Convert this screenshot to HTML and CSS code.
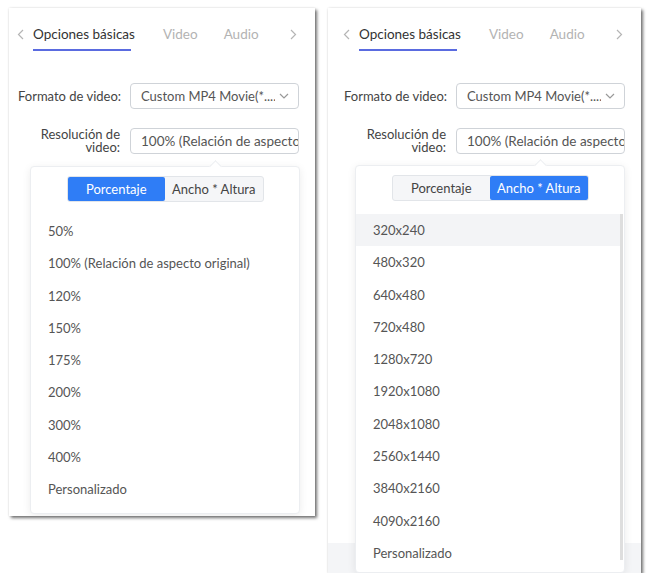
FILE: index.html
```html
<!DOCTYPE html>
<html lang="es">
<head>
    <meta charset="UTF-8">
    <meta name="viewport" content="width=device-width, initial-scale=1.0">
    <title>Opciones básicas</title>
    <link rel="stylesheet" href="styles.css">
</head>
<body>
    <div class="page">
        <!-- porcentaje -->
        <div class="panel">
            <div class="tabs">
                <svg class="tab-arrow" width="7" height="11" viewBox="0 0 7 11"><path d="M6 1L1.5 5.5L6 10" fill="none" stroke="#b5b5b5" stroke-width="1.2"/></svg>
                <span class="tab active">Opciones básicas</span>
                <span class="tab">Video</span>
                <span class="tab">Audio</span>
                <svg class="tab-arrow right" width="7" height="11" viewBox="0 0 7 11"><path d="M1 1L5.5 5.5L1 10" fill="none" stroke="#b5b5b5" stroke-width="1.2"/></svg>
            </div>

            <div class="form">
                <div class="form-row">
                    <label>Formato de video:</label>
                    <div class="select">
                        <span class="select-text">Custom MP4 Movie(*....</span>
                        <svg class="chevron" width="10" height="6" viewBox="0 0 10 6"><path d="M1 1L5 5L9 1" fill="none" stroke="#999" stroke-width="1.2"/></svg>
                    </div>
                </div>
                <div class="form-row">
                    <label>Resolución de<br>video:</label>
                    <div class="select input">
                        <span class="select-text">100% (Relación de aspecto original)</span>
                    </div>
                </div>
            </div>

            <div class="dropdown">
                <div class="toggle">
                    <span class="toggle-btn active">Porcentaje</span>
                    <span class="toggle-btn">Ancho * Altura</span>
                </div>
                <ul class="options">
                    <li>50%</li>
                    <li>100% (Relación de aspecto original)</li>
                    <li>120%</li>
                    <li>150%</li>
                    <li>175%</li>
                    <li>200%</li>
                    <li>300%</li>
                    <li>400%</li>
                    <li>Personalizado</li>
                </ul>
            </div>
        </div>

        <!-- ancho * altura -->
        <div class="panel panel-tall">
            <div class="tabs">
                <svg class="tab-arrow" width="7" height="11" viewBox="0 0 7 11"><path d="M6 1L1.5 5.5L6 10" fill="none" stroke="#b5b5b5" stroke-width="1.2"/></svg>
                <span class="tab active">Opciones básicas</span>
                <span class="tab">Video</span>
                <span class="tab">Audio</span>
                <svg class="tab-arrow right" width="7" height="11" viewBox="0 0 7 11"><path d="M1 1L5.5 5.5L1 10" fill="none" stroke="#b5b5b5" stroke-width="1.2"/></svg>
            </div>

            <div class="form">
                <div class="form-row">
                    <label>Formato de video:</label>
                    <div class="select">
                        <span class="select-text">Custom MP4 Movie(*....</span>
                        <svg class="chevron" width="10" height="6" viewBox="0 0 10 6"><path d="M1 1L5 5L9 1" fill="none" stroke="#999" stroke-width="1.2"/></svg>
                    </div>
                </div>
                <div class="form-row">
                    <label>Resolución de<br>video:</label>
                    <div class="select input">
                        <span class="select-text">100% (Relación de aspecto original)</span>
                    </div>
                </div>
            </div>

            <div class="panel-footer"></div>

            <div class="dropdown">
                <div class="toggle">
                    <span class="toggle-btn">Porcentaje</span>
                    <span class="toggle-btn active">Ancho * Altura</span>
                </div>
                <ul class="options scroll">
                    <li class="hover">320x240</li>
                    <li>480x320</li>
                    <li>640x480</li>
                    <li>720x480</li>
                    <li>1280x720</li>
                    <li>1920x1080</li>
                    <li>2048x1080</li>
                    <li>2560x1440</li>
                    <li>3840x2160</li>
                    <li>4090x2160</li>
                    <li>Personalizado</li>
                </ul>
            </div>
        </div>
    </div>
</body>
</html>
```

FILE: styles.css
```css
* {
    margin: 0;
    padding: 0;
    box-sizing: border-box;
}

body {
    font-family: "Lato", "Noto Sans", sans-serif;
    font-size: 13px;
    color: #444;
    background: #fff;
}

.page {
    display: flex;
    align-items: flex-start;
    gap: 13px;
    padding: 8px 0 0 9px;
}

.panel {
    position: relative;
    display: flex;
    flex-direction: column;
    width: 306px;
    height: 508px;
    background: #fff;
    box-shadow: 2px 2px 3px rgba(0, 0, 0, 0.55), 0 0 2px rgba(0, 0, 0, 0.12);
    overflow: hidden;
}

.panel-tall {
    width: 313px;
    height: 565px;
    padding-left: 7px;
}

/* tabs */
.tabs {
    display: flex;
    align-items: flex-start;
    padding: 18px 18px 0 8px;
}

.tab-arrow {
    margin-top: 3px;
    margin-right: 9px;
}

.tab-arrow.right {
    margin-left: auto;
    margin-right: 0;
}

.tab {
    position: relative;
    line-height: 16px;
    padding-bottom: 9px;
    margin-right: 26px;
    color: #b3b3b3;
    font-size: 13.5px;
}

.tab.active {
    color: #333;
    margin-right: 28px;
}

.tab.active::after {
    content: "";
    position: absolute;
    left: 0;
    bottom: 0;
    width: calc(100% - 4px);
    height: 2px;
    background: #5a6be0;
}

/* form */
.form {
    margin-top: 32px;
    display: flex;
    flex-direction: column;
    gap: 19px;
}

.form-row {
    display: grid;
    grid-template-columns: 102px 1fr;
    column-gap: 10px;
    align-items: center;
    padding: 0 16px 0 9px;
}

.form-row label {
    text-align: right;
    line-height: 13px;
    color: #444;
    white-space: nowrap;
}

.select {
    display: flex;
    align-items: center;
    height: 26px;
    padding: 0 9px 0 10px;
    border: 1px solid #cfd3d8;
    border-radius: 4px;
    overflow: hidden;
    color: #555;
}

.select-text {
    flex: 1;
    white-space: nowrap;
    overflow: hidden;
}

.chevron {
    flex-shrink: 0;
    margin-left: 4px;
}

.select.input {
    padding-right: 0;
}

.select.input .select-text {
    font-size: 13.5px;
}

.panel-footer {
    margin-top: auto;
    margin-left: -7px;
    height: 30px;
    background: #f4f5f7;
}

/* dropdown */
.dropdown {
    position: absolute;
    top: 158px;
    left: 21px;
    width: 270px;
    height: 348px;
    background: #fff;
    border: 1px solid #eceef1;
    border-radius: 4px;
    box-shadow: 0 2px 8px rgba(0, 0, 0, 0.08);
}

.panel-tall .dropdown {
    top: 157px;
    left: 27px;
    height: auto;
    bottom: 0;
}

.dropdown::before {
    content: "";
    position: absolute;
    top: -5px;
    left: 180px;
    width: 8px;
    height: 8px;
    background: #fff;
    border-top: 1px solid #eceef1;
    border-left: 1px solid #eceef1;
    transform: rotate(45deg);
}

.toggle {
    display: flex;
    width: 197px;
    margin: 9px auto 0;
    border: 1px solid #e2e5e9;
    border-radius: 3px;
    background: #f5f6f8;
}

.toggle-btn {
    flex: 1;
    height: 24px;
    line-height: 24px;
    text-align: center;
    color: #444;
    border-radius: 2px;
}

.toggle-btn.active {
    background: #2f7df6;
    color: #fff;
}

.options {
    list-style: none;
    margin-top: 13px;
}

.options li {
    height: 32.3px;
    line-height: 32px;
    padding-left: 17px;
    color: #555;
    white-space: nowrap;
}

.options.scroll {
    position: relative;
    padding-right: 4px;
}

.options.scroll::after {
    content: "";
    position: absolute;
    top: 0;
    right: 1px;
    width: 3px;
    height: 346px;
    background: #dedede;
}

.options li.hover {
    background: #f3f4f6;
}
```
